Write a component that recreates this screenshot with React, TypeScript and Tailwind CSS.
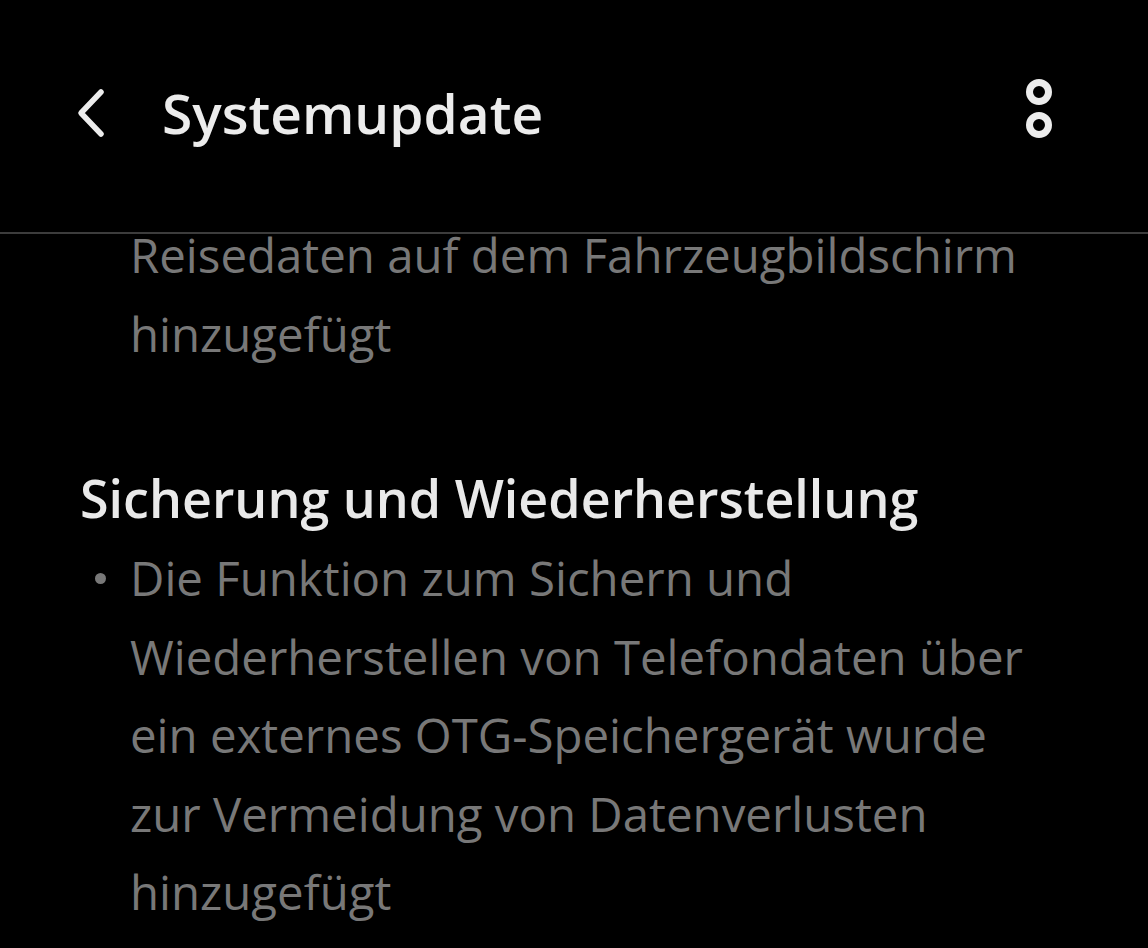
import React from 'react';

function BackIcon() {
  return (
    <svg width="34" height="50" viewBox="0 0 34 50" fill="none">
      <path d="M27 4 L7 25 L27 46" stroke="#ececec" strokeWidth="5.5" strokeLinecap="round" strokeLinejoin="round" />
    </svg>
  );
}

function MoreIcon() {
  return (
    <svg width="30" height="64" viewBox="0 0 30 64" fill="none">
      <circle cx="15" cy="15" r="9.5" stroke="#ececec" strokeWidth="7" />
      <circle cx="15" cy="48" r="9.5" stroke="#ececec" strokeWidth="7" />
    </svg>
  );
}

const lines = [
  'Die Funktion zum Sichern und',
  'Wiederherstellen von Telefondaten über',
  'ein externes OTG-Speichergerät wurde',
  'zur Vermeidung von Datenverlusten',
  'hinzugefügt',
];

export default function App() {
  return (
    <div
      className="w-[1148px] h-[948px] bg-black overflow-hidden flex flex-col"
      style={{ fontFamily: '"Open Sans", "Noto Sans", sans-serif' }}
    >
      <header className="h-[234px] shrink-0 border-b-2 border-[#3c3c3c] flex items-start">
        <div className="flex items-center w-full pt-[85px] pl-[74px] pr-[94px]">
          <BackIcon />
          <h1 className="ml-[54px] text-[55px] font-semibold leading-[52px] text-[#ececec]">
            Systemupdate
          </h1>
          <div className="ml-auto -mt-[8px]">
            <MoreIcon />
          </div>
        </div>
      </header>

      <main className="flex-1 overflow-hidden">
        <div className="-mt-[18px] pl-[80px] pr-[40px]">
          <p className="pl-[50px] text-[47.4px] leading-[78.5px] text-[#787878]">
            Reisedaten auf dem Fahrzeugbildschirm
            <br />
            hinzugefügt
          </p>

          <h2 className="mt-[86px] text-[52px] font-semibold leading-[78px] text-[#e9e9e9]">
            Sicherung und Wiederherstellung
          </h2>

          <div className="mt-[2px] flex text-[47.4px] leading-[78.5px] text-[#787878]">
            <div className="w-[50px] shrink-0 flex justify-start pl-[15px] pt-[34px]">
              <span className="block w-[11px] h-[11px] rounded-full bg-[#787878]" />
            </div>
            <p>
              {lines.map((l, i) => (
                <span key={i} className="block">{l}</span>
              ))}
            </p>
          </div>
        </div>
      </main>
    </div>
  );
}
